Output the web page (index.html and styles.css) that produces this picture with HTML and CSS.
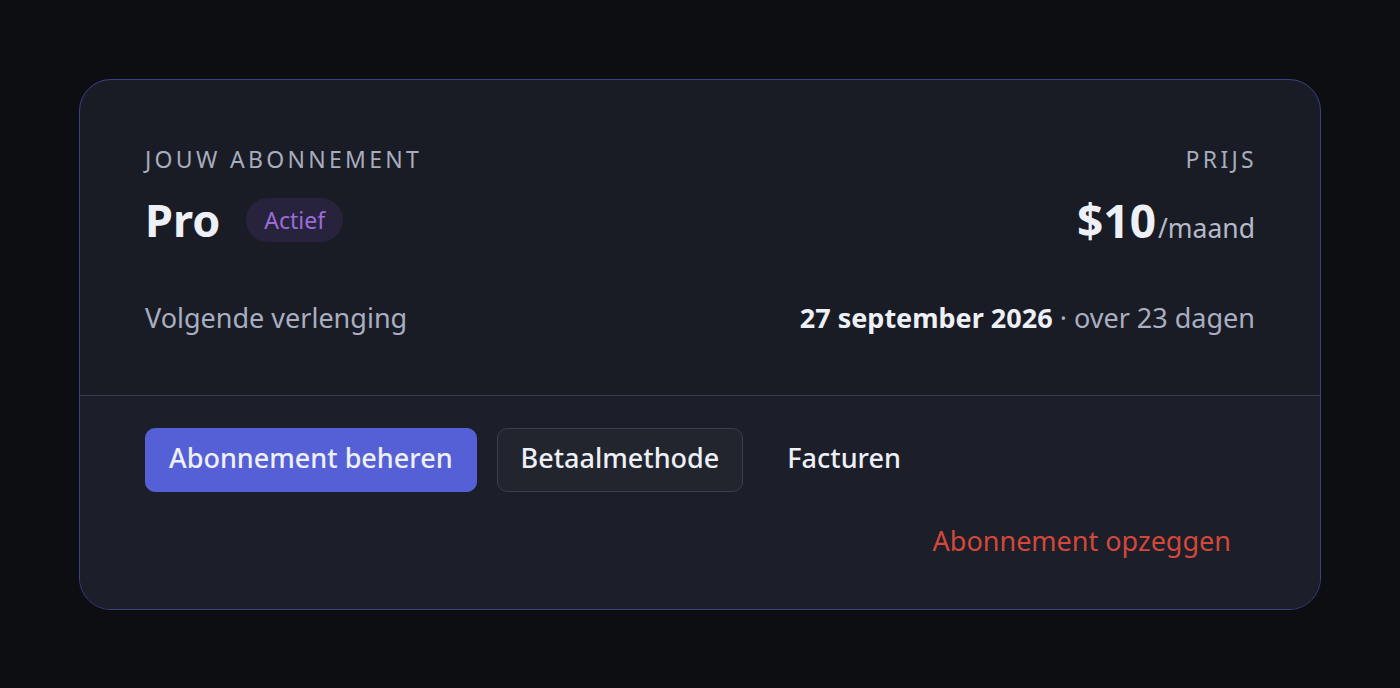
FILE: index.html
```html
<!DOCTYPE html>
<html lang="nl">
<head>
    <meta charset="UTF-8">
    <meta name="viewport" content="width=device-width, initial-scale=1.0">
    <title>Abonnement</title>
    <link rel="stylesheet" href="styles.css">
</head>
<body>
    <div class="card">
        <div class="summary">
            <div class="head">
                <div class="plan">
                    <div class="label">Jouw abonnement</div>
                    <div class="plan-row">
                        <span class="plan-name">Pro</span>
                        <span class="badge">Actief</span>
                    </div>
                </div>
                <div class="price">
                    <div class="label">Prijs</div>
                    <div class="price-row">
                        <span class="amount">$10</span><span class="period">/maand</span>
                    </div>
                </div>
            </div>
            <div class="renewal">
                <span class="muted">Volgende verlenging</span>
                <span><strong>27 september 2026</strong> <span class="muted">· over 23 dagen</span></span>
            </div>
        </div>
        <div class="footer">
            <div class="actions">
                <button class="btn primary">Abonnement beheren</button>
                <button class="btn secondary">Betaalmethode</button>
                <button class="btn ghost">Facturen</button>
            </div>
            <div class="danger-row">
                <button class="btn danger">Abonnement opzeggen</button>
            </div>
        </div>
    </div>
</body>
</html>
```

FILE: styles.css
```css
body {
    margin: 0;
    height: 100vh;
    display: flex;
    justify-content: center;
    align-items: center;
    background-color: #0d0e12;
    font-family: "Noto Sans", "Open Sans", sans-serif;
    color: #eef0f7;
}
.card {
    width: 1240px;
    border: 1px solid #3a4185;
    border-radius: 32px;
    background-color: #1a1c25;
    overflow: hidden;
}
.summary {
    padding: 64px 65px 59px;
}
.head {
    display: flex;
    justify-content: space-between;
}
.label {
    font-size: 23px;
    line-height: 30px;
    letter-spacing: 3.3px;
    text-transform: uppercase;
    color: #a7acbe;
}
.price .label {
    text-align: right;
    margin-right: -2px;
}
.plan-row {
    display: flex;
    align-items: center;
    gap: 26px;
    margin-top: 22px;
    height: 48px;
}
.plan-name {
    font-size: 45px;
    font-weight: 700;
    line-height: 48px;
}
.badge {
    font-size: 23px;
    color: #9a6dd9;
    background-color: #28233d;
    padding: 0 18px;
    height: 44px;
    line-height: 44px;
    border-radius: 22px;
}
.price-row {
    margin-top: 22px;
    height: 48px;
    display: flex;
    align-items: baseline;
    justify-content: flex-end;
}
.amount {
    font-size: 46px;
    font-weight: 700;
    line-height: 48px;
}
.period {
    font-size: 26.5px;
    color: #b5b9c9;
    margin-left: 2px;
}
.renewal {
    display: flex;
    justify-content: space-between;
    margin-top: 56px;
    font-size: 27px;
    line-height: 36px;
}
.renewal strong {
    font-weight: 700;
}
.muted {
    color: #a9aec1;
}
.footer {
    border-top: 1px solid #3a3d48;
    background-color: #1c1e29;
    padding: 32px 65px 34px;
}
.actions {
    display: flex;
    gap: 20px;
}
.btn {
    font-family: inherit;
    font-size: 27px;
    font-weight: 500;
    height: 64px;
    padding: 0 23px 4px;
    border-radius: 10px;
    border: 1px solid transparent;
    background: none;
    color: #eef0f7;
    cursor: pointer;
}
.primary {
    background-color: #5560d6;
    border-color: #5560d6;
}
.secondary {
    background-color: #22252e;
    border-color: #3b3e48;
}
.danger-row {
    display: flex;
    justify-content: flex-end;
    margin-top: 19px;
}
.danger {
    color: #d2483a;
    font-weight: 400;
}
```
